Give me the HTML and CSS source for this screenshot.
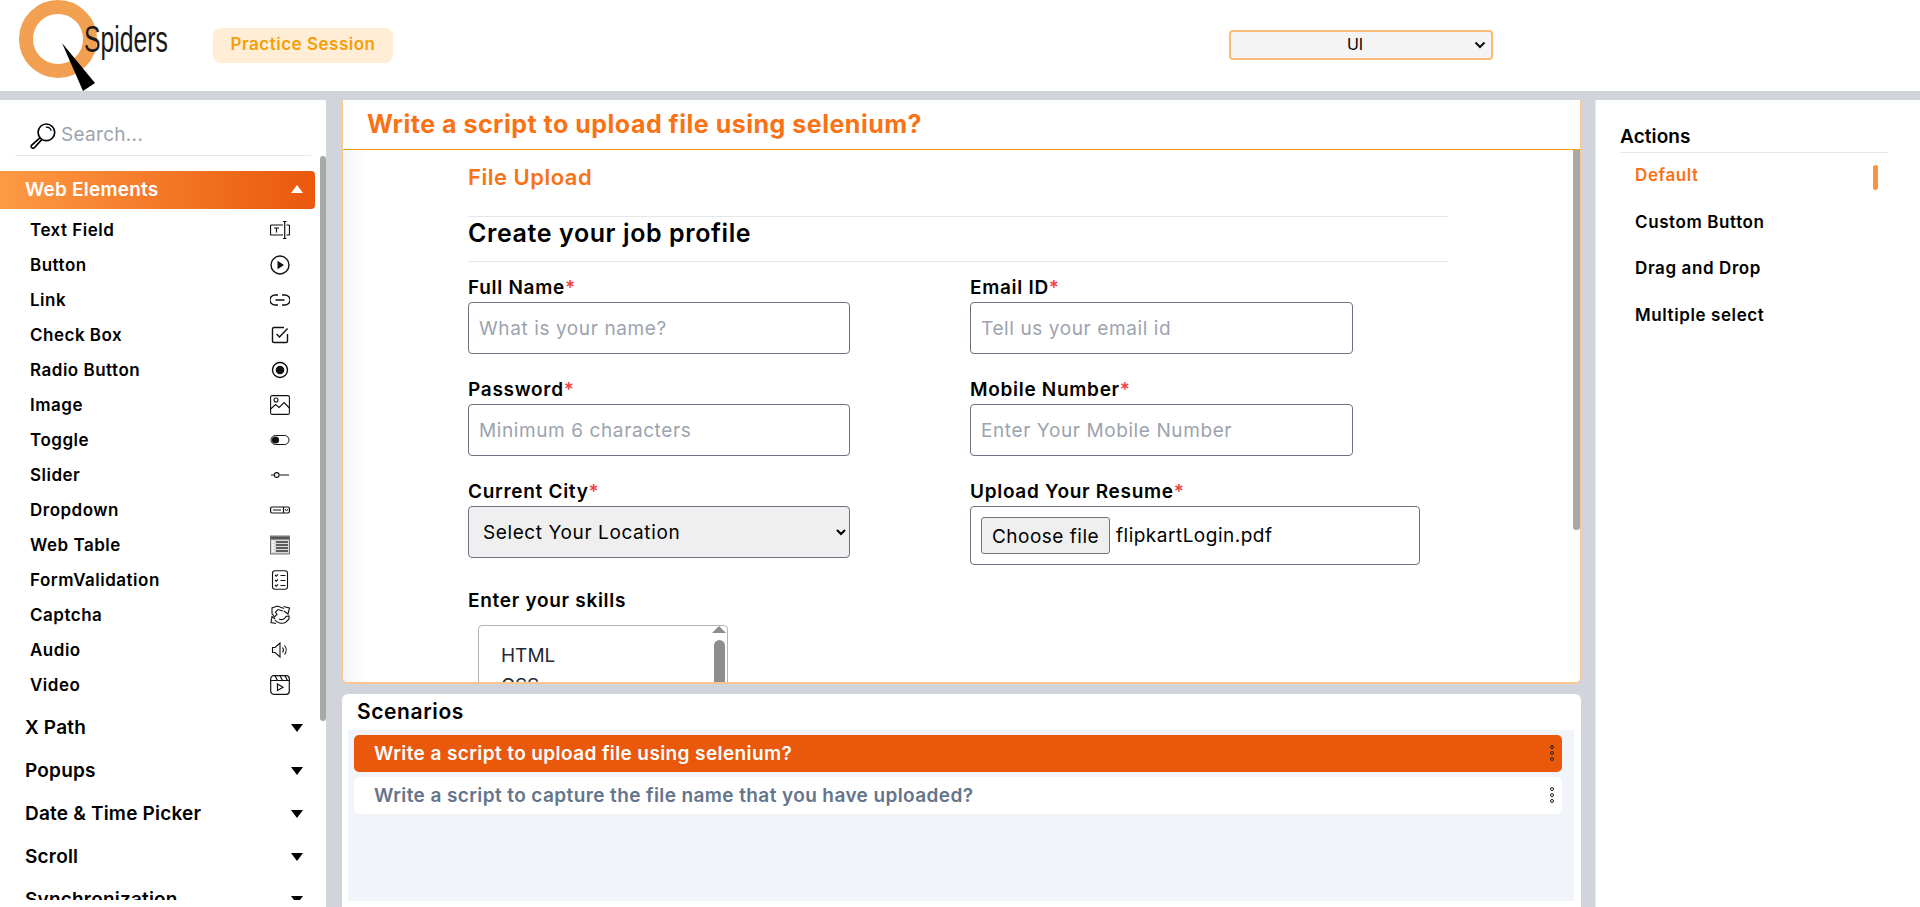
FILE: index.html
```html
<!DOCTYPE html>
<html lang="en">
  <head>
    <title>Practice Session</title>
    <link rel="stylesheet" href="styles.css">
  </head>

  <body>
    <header class="topbar">
      <div class="logo">
        <svg width="172" height="91" viewBox="0 0 172 91">
          <circle cx="58" cy="39" r="32" fill="none" stroke="#f2a052" stroke-width="14" />
          <polygon points="62,43 95,83 83,91" fill="#000" />
          <text x="84" y="52" font-family="Liberation Sans" font-size="37" fill="#1a1a1a" textLength="84" lengthAdjust="spacingAndGlyphs">Spiders</text>
        </svg>
      </div>
      <span class="badge">Practice Session</span>
      <select class="track-select">
        <option>UI</option>
      </select>
    </header>

    <div class="layout">
      <aside class="sidebar">
        <div class="search">
          <svg width="26" height="26" viewBox="1 0.5 24.500 25" fill="none" stroke="#000" stroke-width="1.6">
            <circle cx="16.5" cy="9.5" r="8" />
            <path d="M16 4.5a5 5 0 0 1 5.2 3.6" stroke-width="1.2" />
            <path d="M10.5 14.5 2.2 22a1.8 1.8 0 0 0 2.6 2.4L12 16.5" />
          </svg>
          <span>Search...</span>
        </div>
        <div class="menu">
          <div class="group-head open">
            <span>Web Elements</span>
            <i class="caret up"></i>
          </div>
          <ul class="sub-list">
            <li>Text Field
              <svg viewBox="0 0 20 20" fill="none" stroke="#111" stroke-width="1.2">
                <path d="M13 5H1.500a1 1 0 0 0-1 1v8a1 1 0 0 0 1 1H13M16.500 5h2a1 1 0 0 1 1 1v8a1 1 0 0 1-1 1h-2M14.700 1.500v17M13 1.500h3.500M13 18.500h3.500" />
                <path d="M4 8h5M6.500 8v4.500" />
              </svg>
            </li>
            <li>Button
              <svg viewBox="0 0 20 20" fill="none" stroke="#111" stroke-width="1.400">
                <circle cx="10" cy="10" r="9" />
                <polygon points="7.500,5.800 14,10 7.500,14.200" fill="#111" stroke="none" />
              </svg>
            </li>
            <li>Link
              <svg viewBox="0 0 20 20" fill="none" stroke="#111" stroke-width="1.400">
                <path d="M8 5H5a5 5 0 0 0 0 10h3M12 5h3a5 5 0 0 1 0 10h-3M5.500 10h9" />
              </svg>
            </li>
            <li>Check Box
              <svg viewBox="0 0 20 20" fill="none" stroke="#111" stroke-width="1.400">
                <path d="M17.500 9v7a1.500 1.500 0 0 1-1.500 1.500H4A1.500 1.500 0 0 1 2.500 16V4A1.500 1.500 0 0 1 4 2.500h10" />
                <path d="m6.500 9 3 3 8-8.500" />
              </svg>
            </li>
            <li>Radio Button
              <svg viewBox="0 0 20 20" fill="none" stroke="#111" stroke-width="1.400">
                <circle cx="10" cy="10" r="7.500" />
                <circle cx="10" cy="10" r="4.300" fill="#111" stroke="none" />
              </svg>
            </li>
            <li>Image
              <svg viewBox="0 0 20 20" fill="none" stroke="#111" stroke-width="1.100">
                <rect x="0.600" y="0.600" width="18.800" height="18.800" rx="1.500" />
                <circle cx="6" cy="5" r="2" />
                <path d="m0.600 14 5-4.500 3.500 3 5-5 5.300 5.500" />
              </svg>
            </li>
            <li>Toggle
              <svg viewBox="0 0 20 20" fill="none" stroke="#111" stroke-width="1">
                <rect x="1" y="5.500" width="18" height="9" rx="4.500" />
                <circle cx="5.500" cy="10" r="3.600" fill="#111" stroke="none" />
              </svg>
            </li>
            <li>Slider
              <svg viewBox="0 0 20 20" fill="none" stroke="#111" stroke-width="1.100">
                <path d="M1 10h3M9.500 10h9.500" />
                <circle cx="6.700" cy="10" r="2.400" />
              </svg>
            </li>
            <li>Dropdown
              <svg viewBox="0 0 20 20" fill="none" stroke="#111" stroke-width="1.200">
                <rect x="0.600" y="7" width="18.800" height="6" rx="1.200" />
                <path d="M3 10h8M13.500 7v6" />
                <path d="m15 9 1.500 2L18 9" stroke-width="0.900" />
              </svg>
            </li>
            <li>Web Table
              <svg viewBox="0 0 20 20" fill="none">
                <rect x="0.500" y="1" width="19" height="18" fill="#d8d8d8" stroke="#555" stroke-width="0.800" />
                <rect x="1" y="1.500" width="18" height="3" fill="#555" />
                <path d="M6 7h12M6 10h12M6 13h12M6 16h12" stroke="#333" stroke-width="1.400" />
                <path d="M2 7h2M2 10h2M2 13h2M2 16h2" stroke="#fff" stroke-width="1.400" />
              </svg>
            </li>
            <li>FormValidation
              <svg viewBox="0 0 20 20" fill="none" stroke="#111" stroke-width="1.100">
                <rect x="2.500" y="0.800" width="15" height="18.400" rx="2.500" />
                <path d="m5 5 1.200 1.200L8 4.300M5 10l1.200 1.200L8 9.300M5 15l1.200 1.200L8 14.300M10.500 5.500h5M10.500 10.500h5M10.500 15.500h5" />
              </svg>
            </li>
            <li>Captcha
              <svg viewBox="0 0 20 20" fill="none" stroke="#111" stroke-width="1.100">
                <path d="M14 3.500 7.500 1 2 3v5.500l2.500 3.500L7 9.500 5.500 7 8 4.500l5 1.500" />
                <path d="m13.500 1.500 6 1.500-1.500 6-4-3" />
                <path d="M6 18.500l-5-1 1-6 3 2.500" />
                <path d="M5 15c2 3 7 4 10.500 2.500L19 14v-3l-3 .5c-1 2.500-4 4-7 2.500" />
              </svg>
            </li>
            <li>Audio
              <svg viewBox="0 0 20 20" fill="none" stroke="#111" stroke-width="1.100">
                <path d="M2.500 7.500h2.500l5-4.500v14l-5-4.500H2.500z" />
                <path d="M12.500 7.500a4 4 0 0 1 0 5M14.500 5.500a7 7 0 0 1 0 9" />
              </svg>
            </li>
            <li>Video
              <svg viewBox="0 0 20 20" fill="none" stroke="#111" stroke-width="1.200">
                <rect x="0.700" y="0.700" width="18.600" height="18.600" rx="3" />
                <path d="M0.700 5.500h18.600M5 0.700l2.500 4.800M10 0.700l2.500 4.800M15 0.700l2.500 4.800" />
                <path d="M7.500 9v6.500l5.500-3.200z" />
              </svg>
            </li>
          </ul>
          <div class="group-head"><span>X Path</span><i class="caret"></i></div>
          <div class="group-head"><span>Popups</span><i class="caret"></i></div>
          <div class="group-head"><span>Date &amp; Time Picker</span><i class="caret"></i></div>
          <div class="group-head"><span>Scroll</span><i class="caret"></i></div>
          <div class="group-head"><span>Synchronization</span><i class="caret"></i></div>
        </div>
        <div class="sidebar-thumb"></div>
      </aside>

      <main class="center">
        <section class="question-card">
          <h1 class="question-title">Write a script to upload file using selenium?</h1>
          <div class="practice">
            <h2 class="practice-name">File Upload</h2>
            <h3 class="form-title">Create your job profile</h3>
            <form class="job-form">
              <div class="field">
                <label>Full Name<em>*</em></label>
                <input type="text" placeholder="What is your name?">
              </div>
              <div class="field">
                <label>Email ID<em>*</em></label>
                <input type="text" placeholder="Tell us your email id">
              </div>
              <div class="field">
                <label>Password<em>*</em></label>
                <input type="text" placeholder="Minimum 6 characters">
              </div>
              <div class="field">
                <label>Mobile Number<em>*</em></label>
                <input type="text" placeholder="Enter Your Mobile Number">
              </div>
              <div class="field">
                <label>Current City<em>*</em></label>
                <select>
                  <option>Select Your Location</option>
                </select>
              </div>
              <div class="field">
                <label>Upload Your Resume<em>*</em></label>
                <div class="file-box">
                  <button type="button">Choose file</button>
                  <span>flipkartLogin.pdf</span>
                </div>
              </div>
              <div class="field skills">
                <label>Enter your skills</label>
                <div class="listbox">
                  <div>HTML</div>
                  <div>CSS</div>
                  <i class="list-arrow"></i>
                  <i class="list-thumb"></i>
                </div>
              </div>
            </form>
            <div class="practice-thumb"></div>
          </div>
        </section>

        <section class="scenario-card">
          <h2 class="scenario-title">Scenarios</h2>
          <div class="scenario-list">
            <div class="scenario active">
              <span>Write a script to upload file using selenium?</span>
              <b class="dots"><i></i><i></i><i></i></b>
            </div>
            <div class="scenario">
              <span>Write a script to capture the file name that you have uploaded?</span>
              <b class="dots"><i></i><i></i><i></i></b>
            </div>
          </div>
        </section>
      </main>

      <aside class="actions">
        <h2 class="actions-title">Actions</h2>
        <ul class="action-list">
          <li class="active">Default</li>
          <li>Custom Button</li>
          <li>Drag and Drop</li>
          <li>Multiple select</li>
        </ul>
      </aside>
    </div>
  </body>
</html>
```

FILE: styles.css
```css
*,
*:before,
*:after {
  box-sizing: border-box;
}

html,
body {
  height: 100%;
}

body {
  margin: 0;
  overflow: hidden;
  background-color: #d1d5db;
  color: #000;
  font-family: Inter, "Noto Sans", sans-serif;
  display: flex;
  flex-direction: column;
}

/* top bar */
.topbar {
  height: 91px;
  flex: none;
  background-color: #fff;
  display: flex;
  align-items: flex-start;
}

.logo {
  width: 213px;
  height: 91px;
}

.logo svg {
  display: block;
}

.badge {
  margin-top: 28px;
  width: 180px;
  height: 35px;
  padding-bottom: 3px;
  border-radius: 8px;
  background-color: #ffedd5;
  color: #f59e0b;
  font-size: 17px;
  font-weight: 600;
  letter-spacing: 0.5px;
  display: flex;
  align-items: center;
  justify-content: center;
}

.track-select {
  margin: 30px 0 0 836px;
  width: 264px;
  height: 30px;
  padding: 0 12px 2px 0;
  border: 2px solid #fdba74;
  border-radius: 4px;
  background: #f4f4f5 url("data:image/svg+xml,%3Csvg xmlns='http://www.w3.org/2000/svg' width='12' height='8'%3E%3Cpath d='M1.500 1.500 6 6l4.500-4.500' fill='none' stroke='%23111' stroke-width='2'/%3E%3C/svg%3E") no-repeat right 5px center;
  color: #000;
  font-family: Inter, sans-serif;
  font-size: 16px;
  text-align: center;
  appearance: none;
}

/* three columns */
.layout {
  flex: 1;
  min-height: 0;
  padding-top: 9px;
  display: grid;
  grid-template-columns: 342px 1239px 339px;
}

/* left menu */
.sidebar {
  width: 326px;
  min-height: 0;
  padding-bottom: 7px;
  background-color: #fff;
  position: relative;
  display: flex;
  flex-direction: column;
}

.search {
  height: 56px;
  flex: none;
  margin: 0 15px 15px;
  padding: 23px 0 0 15px;
  border-bottom: 1px solid #e5e7eb;
  display: flex;
  align-items: flex-start;
  gap: 5px;
  color: #9ca3af;
  font-size: 19px;
  letter-spacing: 0.3px;
  line-height: 24px;
}

.search svg {
  flex: none;
}

.menu {
  flex: 1;
  min-height: 0;
  overflow: hidden;
}

.group-head {
  height: 43px;
  width: 315px;
  padding: 0 12px 0 25px;
  display: flex;
  align-items: center;
  justify-content: space-between;
  font-size: 19px;
  font-weight: 600;
  letter-spacing: 0.2px;
}

.group-head.open {
  height: 38px;
  padding-bottom: 2px;
  color: #fff;
  border-radius: 0 4px 4px 0;
  background: linear-gradient(90deg, #fd9a45, #ea580c);
}

.caret {
  width: 0;
  height: 0;
  border-left: 6.500px solid transparent;
  border-right: 6.500px solid transparent;
  border-top: 8.500px solid #000;
}

.caret.up {
  border-top: 0;
  border-bottom: 8.500px solid #fff;
}

.sub-list {
  list-style: none;
  margin: 3px 0 4px;
  padding: 0;
  width: 290px;
}

.sub-list li {
  height: 35px;
  padding-left: 30px;
  display: flex;
  align-items: center;
  justify-content: space-between;
  font-size: 17px;
  font-weight: 600;
  letter-spacing: 0.5px;
}

.sub-list svg {
  width: 20px;
  height: 20px;
  flex: none;
}

.sidebar-thumb {
  position: absolute;
  right: 0;
  top: 56px;
  width: 6px;
  height: 565px;
  border-radius: 3px;
  background-color: #a8a8a8;
}

/* middle column */
.center {
  min-height: 0;
  display: flex;
  flex-direction: column;
  gap: 10px;
}

.question-card {
  height: 584px;
  flex: none;
  background-color: #fff;
  border: 1px solid #fbc78d;
  border-top: 0;
  border-bottom-width: 2px;
  border-radius: 0 0 6px 6px;
  overflow: hidden;
  display: flex;
  flex-direction: column;
}

.question-title {
  margin: 0;
  height: 50px;
  flex: none;
  padding-left: 24px;
  border-bottom: 1px solid #f59e0b;
  color: #f97316;
  font-size: 25px;
  font-weight: 700;
  letter-spacing: 0.5px;
  line-height: 48px;
}

.practice {
  flex: 1;
  min-height: 0;
  position: relative;
  overflow: hidden;
  padding-left: 125px;
  background: linear-gradient(90deg, #f3f4f6, #fff 24px);
}

.practice-name {
  margin: 0;
  height: 66px;
  padding-top: 12px;
  color: #f97316;
  font-size: 22px;
  font-weight: 600;
  letter-spacing: 0.5px;
  line-height: 30px;
}

.form-title {
  margin: 0;
  width: 980px;
  height: 46px;
  border-top: 1px solid #e5e7eb;
  border-bottom: 1px solid #e5e7eb;
  font-size: 25px;
  font-weight: 600;
  letter-spacing: 0.6px;
  line-height: 33px;
}

.job-form {
  margin-top: 13px;
  display: grid;
  grid-template-columns: 502px 450px;
  grid-auto-rows: 102px;
}

.field {
  width: 382px;
}

.field:nth-child(even) {
  width: 383px;
}

.field:nth-child(6) {
  width: 450px;
}

.field label {
  display: block;
  height: 27px;
  font-size: 19px;
  font-weight: 600;
  letter-spacing: 0.7px;
  line-height: 25px;
}

.field em {
  color: #ef4444;
  font-style: normal;
}

.field input,
.field select {
  display: block;
  width: 100%;
  height: 52px;
  padding: 0 10px;
  border: 1px solid #6b7280;
  border-radius: 4px;
  font-family: Inter, "Noto Sans", sans-serif;
  font-size: 19px;
  letter-spacing: 0.6px;
  color: #000;
}

.field select {
  background-color: #efefef;
}

.field input::placeholder {
  color: #9ca3af;
}

.file-box {
  height: 59px;
  padding: 10px;
  border: 1px solid #6b7280;
  border-radius: 4px;
  display: flex;
  align-items: flex-start;
  gap: 6px;
  font-size: 19px;
  letter-spacing: 0.5px;
}

.file-box button {
  width: 129px;
  height: 37px;
  padding: 1px 0 0;
  border: 1px solid #767676;
  border-radius: 3px;
  background-color: #efefef;
  font-family: inherit;
  font-size: 19px;
  letter-spacing: 0.5px;
  color: #000;
}

.file-box span {
  line-height: 37px;
}

.skills label {
  margin-top: 7px;
}

.listbox {
  position: relative;
  width: 250px;
  height: 120px;
  margin: 10px 0 0 10px;
  padding: 15px 0 0 22px;
  border: 1px solid #b5b5b5;
  border-radius: 4px;
  font-size: 19px;
  line-height: 30px;
  color: #1f2937;
}

.list-arrow {
  position: absolute;
  top: 0;
  right: 1px;
  border-left: 7px solid transparent;
  border-right: 7px solid transparent;
  border-bottom: 7px solid #8d8d8d;
}

.list-thumb {
  position: absolute;
  top: 14px;
  right: 2px;
  width: 11px;
  height: 90px;
  border-radius: 6px;
  background-color: #8d8d8d;
}

.practice-thumb {
  position: absolute;
  top: 0;
  right: 0;
  width: 7px;
  height: 380px;
  border-radius: 0 0 3px 3px;
  background-color: #a8a8a8;
}

/* scenarios */
.scenario-card {
  flex: 1;
  min-height: 0;
  padding: 0 7px 6px 6px;
  background-color: #fff;
  border-radius: 6px 6px 0 0;
  display: flex;
  flex-direction: column;
}

.scenario-title {
  margin: 0;
  height: 36px;
  padding-left: 9px;
  font-size: 21px;
  font-weight: 600;
  letter-spacing: 0.6px;
  line-height: 35px;
}

.scenario-list {
  flex: 1;
  padding: 5px 12px 0 6px;
  background-color: #f1f5f9;
}

.scenario {
  height: 37px;
  margin-bottom: 5px;
  padding: 0 8px 1px 20px;
  border-radius: 5px;
  background-color: #fff;
  color: #64748b;
  display: flex;
  align-items: center;
  justify-content: space-between;
  font-size: 19px;
  font-weight: 600;
  letter-spacing: 0.4px;
}

.scenario.active {
  background-color: #ea580c;
  color: #fff;
}

.dots {
  display: flex;
  flex-direction: column;
  gap: 2px;
}

.dots i {
  width: 4px;
  height: 4px;
  border: 1px solid #222;
  border-radius: 50%;
}

/* right column */
.actions {
  margin-left: 14px;
  padding: 24px 32px 0 24px;
  background-color: #fff;
  border-left: 1px solid #e5e7eb;
}

.actions-title {
  margin: 0;
  height: 29px;
  border-bottom: 1px solid #e5e7eb;
  font-size: 19px;
  font-weight: 600;
  letter-spacing: 0.1px;
  line-height: 26px;
}

.action-list {
  list-style: none;
  margin: 0;
  padding: 0 0 0 15px;
}

.action-list li {
  height: 46.500px;
  font-size: 17px;
  font-weight: 600;
  letter-spacing: 0.6px;
  line-height: 44px;
  position: relative;
}

.action-list li.active {
  color: #f97316;
}

.action-list li.active:after {
  content: "";
  position: absolute;
  right: 10px;
  top: 12px;
  width: 5px;
  height: 25px;
  border-radius: 3px;
  background-color: #fb923c;
}
```
